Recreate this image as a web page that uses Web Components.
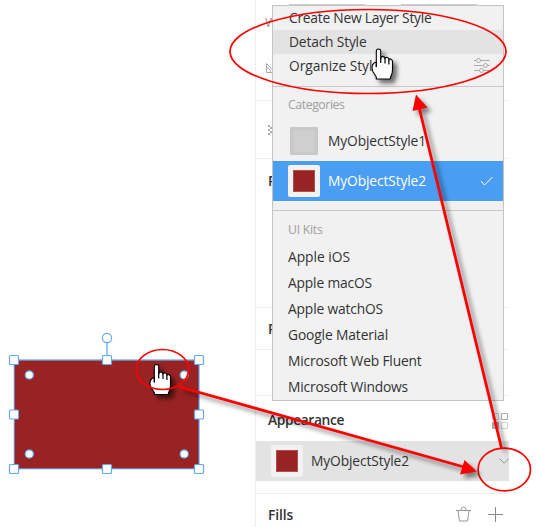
<!DOCTYPE html>
<html lang="en"><head><meta charset="utf-8"><title>Layer styles</title>
<style>
html,body{margin:0;background:#fff}
body{width:540px;height:527px;overflow:hidden;position:relative;font:13.8px/20px "Open Sans","Noto Sans",sans-serif;color:#333}
</style></head><body>
<style-editor></style-editor>
<script>
const define=(name,html,setup)=>customElements.define(name,class extends HTMLElement{
  constructor(){super();this.attachShadow({mode:'open'}).innerHTML=html}
  connectedCallback(){if(setup)setup(this,this.shadowRoot)}
});

/* Label that spreads its letters over the given width. */
define('fit-label','<style>:host{display:inline-block;white-space:nowrap;flex:none}</style><span><slot></slot></span>',(el,root)=>{
  const w=+el.getAttribute('width'),n=el.textContent.length,s=root.querySelector('span');
  if(w)s.style.letterSpacing=((w-s.getBoundingClientRect().width)/n)+'px';
});

define('style-swatch',`<style>
:host{display:flex;flex:none;box-sizing:border-box;width:32px;height:32px;padding:5px;border-radius:2px;background:#f2f2f2}
i{flex:1;box-sizing:border-box;border:1px solid #b14e4e;background:#992323}
:host([plain]){width:28px;height:28px;margin:0 2px;padding:3px;background:#c8c8c8;border-radius:0}
:host([plain]) i{border-color:#cecece;background:#cfcfcf}
</style><i></i>`);

define('menu-item',`<style>
:host{display:flex;align-items:center;height:24px;padding-left:16px;box-sizing:border-box;flex:none}
:host([active]){background:#e3e3e3}
:host([kit]){height:26px;padding-left:15px}
:host([styled]){height:40px;padding:0 10px 0 15px;gap:8px}
:host([selected]){background:#499df3;color:#fff}
::slotted(svg){margin-left:auto}
</style><slot></slot>`);

define('menu-heading',`<style>:host{display:flex;align-items:center;padding-left:15px;box-sizing:border-box;border-top:1px solid #c8c8c8;font-size:12.3px;color:#a0a0a0;flex:none}</style><slot></slot>`);

define('style-menu',`<style>
:host{position:absolute;left:272px;top:5px;width:232px;height:396px;box-sizing:border-box;border:1px solid #c4c4c4;background:#f1f1f1;display:flex;flex-direction:column}
.actions{height:80px;flex:none}.cats{height:35px;padding-top:2px}.kits{height:34px;margin-top:9px;padding-top:4px}
svg{display:block;fill:none}
</style>
<div class="actions">
<menu-item><fit-label width="142.5">Create New Layer Style</fit-label></menu-item>
<menu-item active><fit-label width="77.5">Detach Style</fit-label></menu-item>
<menu-item><fit-label width="91">Organize Style</fit-label>
<svg width="29" height="16" viewBox="0 0 29 16" stroke="#aaa"><path d="M0 2.5h2M7 2.5h9M0 7.5h9M14 7.5h2M0 12.5h5M10 12.5h6"/><circle cx="4.5" cy="2.5" r="2"/><circle cx="11.5" cy="7.5" r="2"/><circle cx="7.5" cy="12.5" r="2"/></svg></menu-item>
</div>
<menu-heading class="cats"><fit-label width="56.5">Categories</fit-label></menu-heading>
<menu-item styled><style-swatch plain></style-swatch><fit-label width="98">MyObjectStyle1</fit-label></menu-item>
<menu-item styled selected><style-swatch></style-swatch><fit-label width="98">MyObjectStyle2</fit-label><svg width="13" height="12" stroke="#fff"><path d="M1 6l3.500 4L12.500 2"/></svg></menu-item>
<menu-heading class="kits"><fit-label width="34.5">UI Kits</fit-label></menu-heading>
<menu-item kit><fit-label width="62">Apple iOS</fit-label></menu-item>
<menu-item kit><fit-label width="84">Apple macOS</fit-label></menu-item>
<menu-item kit><fit-label width="95">Apple watchOS</fit-label></menu-item>
<menu-item kit><fit-label width="100">Google Material</fit-label></menu-item>
<menu-item kit><fit-label width="133.5">Microsoft Web Fluent</fit-label></menu-item>
<menu-item kit><fit-label width="120">Microsoft Windows</fit-label></menu-item>`);

define('panel-section',`<style>:host{display:block;box-sizing:border-box;border-bottom:1px solid #eee;flex:none}</style><slot></slot>`);

define('inspector-panel',`<style>
:host{display:flex;flex-direction:column;width:254px;height:527px;box-sizing:border-box;border-left:1px solid #eee}
svg{display:block;fill:none;stroke:#aaa}
b{display:block;font-weight:600;padding-left:12px;letter-spacing:0}
.fields{display:flex;gap:36px;padding:4px 0 0 33px}.fields i{width:76px;height:1px;background:#ccc}
.w{padding:7px 0 0 9px;font-size:13px;color:#999}
.angle{margin:31px 0 0 10px}.check{margin:24px 0 0 12px}
.head{display:flex;justify-content:space-between;padding-top:14px;height:45px;box-sizing:border-box}
.head svg{margin-top:2px}
.row{height:40px;background:#e3e3e3;display:flex;align-items:center;padding-left:15px;gap:8px}
.row svg{margin-left:auto}
.fills{display:flex;padding:11px 6px 0 0}.fills b{flex:1}.fills svg{margin-right:17px}.fills svg+svg{margin:0}
</style>
<panel-section style="height:101px"><div class="fields"><i></i><i></i></div><div class="w">W</div>
<svg class="angle" width="11" height="11"><path d="M.5 .5v9h9zM.5 5q4 0 4 4.500"/></svg></panel-section>
<panel-section style="height:58px"><svg class="check" width="10" height="10" style="fill:#aaa;stroke:none"><path d="M0 0h2v2H0zM4 0h2v2H4zM2 2h2v2H2zM0 4h2v2H0zM4 4h2v2H4zM2 6h2v2H2zM0 8h2v2H0zM4 8h2v2H4z"/></svg></panel-section>
<panel-section style="height:149px"><b style="padding-top:12px">P</b></panel-section>
<panel-section style="height:42px"><b style="padding-top:11px">P</b></panel-section>
<panel-section style="height:46px"></panel-section>
<panel-section style="height:98px"><div class="head"><b><fit-label width="76">Appearance</fit-label></b>
<svg width="17" height="17"><path stroke-dasharray="1 1" d="M.5 1.500h6v6h-6zM9.500 10.500h6v6h-6z"/><path d="M9.500 1.500h6v6h-6z"/><path fill="#aaa" d="M.5 10.500h6v6h-6z"/></svg></div>
<div class="row"><style-swatch></style-swatch><fit-label width="98">MyObjectStyle2</fit-label><svg width="10" height="8" style="stroke:#999"><path d="M.5 1.500l4.700 4.700L9.800 1.500"/></svg></div></panel-section>
<div class="fills"><b><fit-label width="25">Fills</fit-label></b>
<svg width="15" height="17"><path stroke="#999" d="M0 5.500h15M2 6l1.500 10h8L13 6M5 5q0-3 2.500-3T10 5"/></svg><svg width="15" height="17"><path stroke="#888" d="M7.500 2v15M0 9.500h15"/></svg></div>`);

/* Selected rectangle with resize, rotate and corner-radius handles. */
define('shape-canvas',`<style>:host{display:block;width:255px;height:527px}svg{display:block}</style>
<svg width="255" height="527"><rect x="14.500" y="360.500" width="184.500" height="108" fill="#992323"/><rect x="14" y="359.500" width="185.500" height="109.500" fill="none" stroke="#9cc8f6"/><rect x="14.500" y="360.500" width="184" height="108" fill="none" stroke="#6a76b4" stroke-width=".8"/>
<path d="M107 343v12" stroke="#64a9f0" stroke-width="1.300"/><g class="h" fill="#fff" stroke="#60a8f2" stroke-width="1.200"></g></svg>`,(el,root)=>{
  const g=root.querySelector('.h');let out='<circle cx="107" cy="338" r="4.6"/>';
  for(const [x,y] of [[14,360],[107,360],[199,360],[14,414.5],[199,414.5],[14,469],[107,469],[199,469]])out+=`<rect x="${x-4.5}" y="${y-4.5}" width="9" height="9" rx="1"/>`;
  for(const [x,y] of [[29.3,375],[184.2,375],[29.3,454],[184.2,454]])out+=`<circle cx="${x}" cy="${y}" r="4.1"/>`;
  g.innerHTML=out;
});

define('callout-layer',`<style>:host{position:absolute;left:0;top:0}svg{display:block}.s{filter:drop-shadow(4px 4px 2px #0007)}.c{filter:drop-shadow(4px 4px 2px #0008)}</style>
<svg width="540" height="527"><defs><g id="hand"><path fill="#fff" stroke="#000" stroke-width="1.100" stroke-linejoin="round" d="M-2.200 17.500V2.200Q-2.200 0 0 0T2.200 2.200V9.500Q2.800 7.300 4.600 7.600T6.500 9.600Q7.100 8 8.800 8.600T10.400 10.700Q11 9.500 12.500 10.200T14 12.600V20.500Q14 24 12.700 26.500L11.500 30H-2.200V28L-5.800 22.200Q-7.200 19.500-6.200 16.500T-2.200 13Z"/><path d="M2.200 9V14M6.500 9.500V14.500M10.400 10.500V15.500M-2.200 13V18" fill="none" stroke="#000" stroke-width="1.200"/></g></defs>
<g class="c"><use href="#hand" x="378.500" y="49"/></g><g class="c"><use href="#hand" x="156.500" y="364.500"/></g>
<g fill="none" stroke="red" stroke-width="1.700"><ellipse cx="368" cy="51.500" rx="138" ry="42"/><ellipse cx="162.500" cy="369.500" rx="26.200" ry="20"/><ellipse cx="504.300" cy="469.500" rx="26.200" ry="21.300"/></g>
<g class="s" stroke="red" stroke-width="2.800" fill="red"><path d="M180 387L464 467M501.500 448L419 107"/><path stroke="none" d="M477 471.500L464.500 460 460 474.500zM416 94.500L412.500 111 427.500 107.500z"/></g></svg>`);

define('style-editor',`<style>:host{display:flex;width:540px;height:527px}</style><shape-canvas></shape-canvas><inspector-panel></inspector-panel><style-menu></style-menu><callout-layer></callout-layer>`);
</script></body></html>
